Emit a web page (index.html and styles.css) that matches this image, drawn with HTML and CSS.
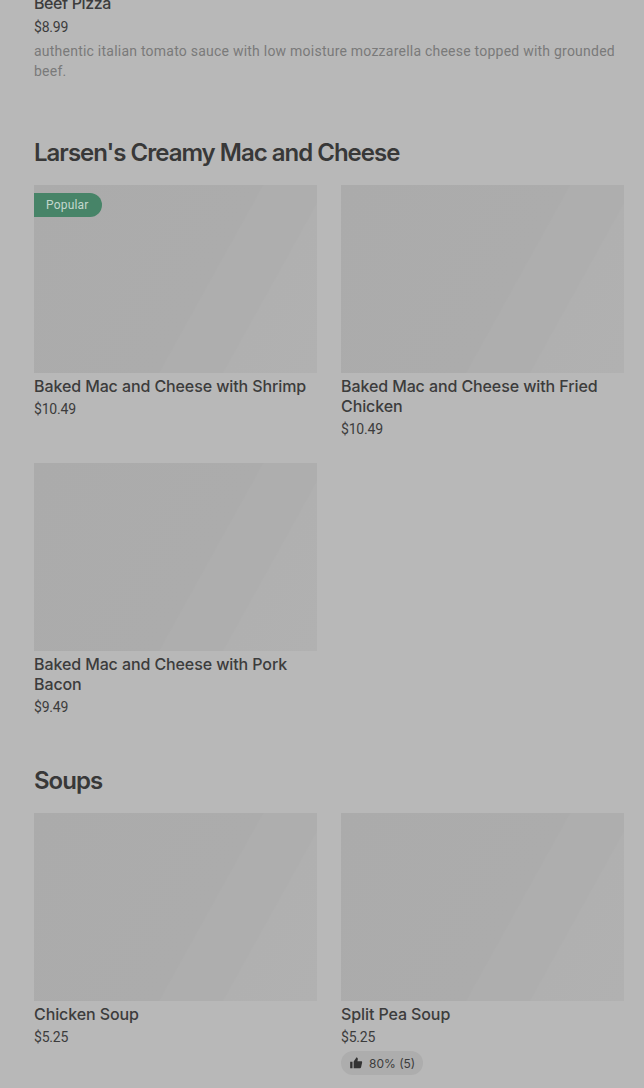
FILE: index.html
```html
<!DOCTYPE html>
<html lang="en">
<head>
<meta charset="utf-8">
<title>Menu</title>
<link rel="stylesheet" href="styles.css">
</head>
<body>
<main class="menu">
  <article class="lead-item">
    <h3 class="item-name">Beef Pizza</h3>
    <p class="item-price">$8.99</p>
    <p class="item-desc">authentic italian tomato sauce with low moisture mozzarella cheese topped with grounded beef.</p>
  </article>

  <section class="category cat-mac">
    <h2 class="cat-title">Larsen's Creamy Mac and Cheese</h2>
    <div class="grid">
      <article class="card">
        <div class="photo"><span class="badge">Popular</span></div>
        <h3 class="item-name">Baked Mac and Cheese with Shrimp</h3>
        <p class="item-price">$10.49</p>
      </article>
      <article class="card">
        <div class="photo"></div>
        <h3 class="item-name">Baked Mac and Cheese with Fried Chicken</h3>
        <p class="item-price">$10.49</p>
      </article>
      <article class="card">
        <div class="photo"></div>
        <h3 class="item-name">Baked Mac and Cheese with Pork Bacon</h3>
        <p class="item-price">$9.49</p>
      </article>
    </div>
  </section>

  <section class="category cat-soups">
    <h2 class="cat-title">Soups</h2>
    <div class="grid">
      <article class="card">
        <div class="photo"></div>
        <h3 class="item-name">Chicken Soup</h3>
        <p class="item-price">$5.25</p>
      </article>
      <article class="card">
        <div class="photo"></div>
        <h3 class="item-name">Split Pea Soup</h3>
        <p class="item-price">$5.25</p>
        <span class="rating">
          <svg class="thumb" viewBox="0 0 24 24" aria-hidden="true"><path d="M2 10h4v11H2zM8 21V9.500L13 2l1.200.8c.8.6 1.200 1.500 1 2.500L14.500 9H21c1 0 1.700 1 1.500 2l-1.800 8.300c-.2 1-1 1.700-2 1.700z"/></svg>
          80% (5)
        </span>
      </article>
    </div>
  </section>
</main>
</body>
</html>
```
FILE: styles.css
```css
* { box-sizing: border-box; }
html, body { margin: 0; height: 100%; }
body {
  background: #b8b8b8;
  color: #383838;
  font-family: Inter, "Liberation Sans", sans-serif;
  overflow: hidden;
}
.menu { padding: 0 20px 0 34px; margin-top: -7px; }
h2, h3, p { margin: 0; }
.item-name { font-size: 16px; line-height: 20px; font-weight: 500; letter-spacing: -0.1px; color: #3c3c3c; }
.lead-item .item-name { letter-spacing: -0.4px; }
.card .item-name { margin-top: 3px; }
.item-price { font-family: Roboto, sans-serif; font-size: 14px; line-height: 20px; font-weight: 400; letter-spacing: -0.2px; color: #3c3c3c; margin-top: 3px; }
.lead-item .item-price { margin-top: 4px; }
.item-desc { font-family: Roboto, sans-serif; font-size: 14px; line-height: 20px; letter-spacing: 0.23px; color: #7a7a7a; margin-top: 4px; }
.category { margin-top: 56px; }
.cat-soups { margin-top: 48px; }
.cat-title { font-size: 24px; line-height: 32px; font-weight: 600; letter-spacing: -1px; color: #383838; }
.grid { display: grid; grid-template-columns: 283px 283px; column-gap: 24px; row-gap: 24px; margin-top: 16px; }
.photo {
  position: relative;
  height: 188px;
  background: linear-gradient(119deg, #ababab 0%, #acacac 59%, #aeaeae 59.5%, #aeaeae 75.5%, #b0b0b0 76%, #b1b1b1 100%);
}
.badge {
  position: absolute;
  left: 0;
  top: 8px;
  height: 24px;
  width: 68px;
  padding-left: 12px;
  border-radius: 0 12px 12px 0;
  background: #478468;
  color: #c3d8ce;
  font-family: Roboto, sans-serif;
  font-size: 12px;
  letter-spacing: 0.2px;
  line-height: 24px;
}
.rating {
  display: inline-flex;
  align-items: center;
  gap: 6px;
  height: 24px;
  margin-top: 4px;
  padding: 0 8px;
  border-radius: 12px;
  background: #adadad;
  color: #3c3c3c;
  font-size: 12px;
}
.thumb { width: 14px; height: 14px; fill: #333; }
```
